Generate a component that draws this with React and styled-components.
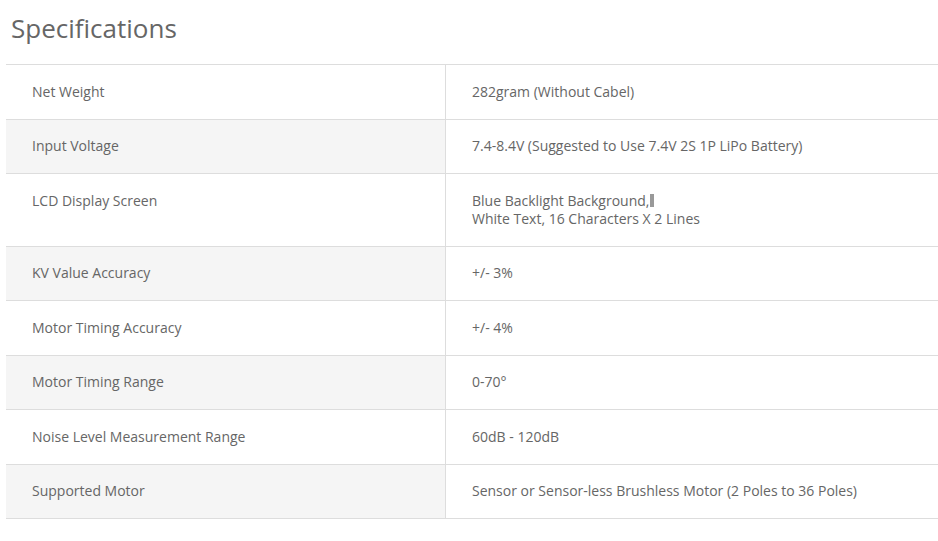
import React from "react";
import styled, { createGlobalStyle } from "styled-components";

const Global = createGlobalStyle`
  html, body { margin: 0; padding: 0; background: #fff; }
  body { font-family: "Open Sans", "Liberation Sans", sans-serif; }
`;

const Page = styled.div`
  padding: 10px 0 0 6px;
`;

const Title = styled.h2`
  margin: 0 0 0 5px;
  font-size: 26px;
  font-weight: 400;
  color: #666;
  line-height: 36px;
  height: 54px;
`;

const Table = styled.table`
  border-collapse: collapse;
  width: 932px;
  border-top: 1px solid #ddd;
  font-size: 14px;
  color: #666;
`;

const Row = styled.tr`
  border-bottom: 1px solid #ddd;
`;

const Label = styled.td`
  width: 387px;
  padding: 17.75px 26px;
  line-height: 18px;
  vertical-align: top;
  background: ${(p) => (p.$shaded ? "#f5f5f5" : "#fff")};
  border-right: 1px solid #ddd;
`;

const Value = styled.td`
  padding: 17.75px 26px;
  line-height: 18px;
  vertical-align: top;
`;

const Caret = styled.span`
  display: inline-block;
  width: 4px;
  height: 13px;
  background: #999;
  vertical-align: -1px;
  margin-left: 1px;
`;

const rows = [
  ["Net Weight", "282gram (Without Cabel)"],
  ["Input Voltage", "7.4-8.4V (Suggested to Use 7.4V 2S 1P LiPo Battery)"],
  ["LCD Display Screen", "lcd"],
  ["KV Value Accuracy", "+/- 3%"],
  ["Motor Timing Accuracy", "+/- 4%"],
  ["Motor Timing Range", "0-70°"],
  ["Noise Level Measurement Range", "60dB - 120dB"],
  ["Supported Motor", "Sensor or Sensor-less Brushless Motor (2 Poles to 36 Poles)"],
];

export default function App() {
  return (
    <Page>
      <Global />
      <Title>Specifications</Title>
      <Table>
        <tbody>
          {rows.map(([k, v], i) => (
            <Row key={k}>
              <Label $shaded={i % 2 === 1}>{k}</Label>
              <Value>
                {v === "lcd" ? (
                  <>
                    Blue Backlight Background,<Caret />
                    <br />
                    White Text, 16 Characters X 2 Lines
                  </>
                ) : (
                  v
                )}
              </Value>
            </Row>
          ))}
        </tbody>
      </Table>
    </Page>
  );
}
